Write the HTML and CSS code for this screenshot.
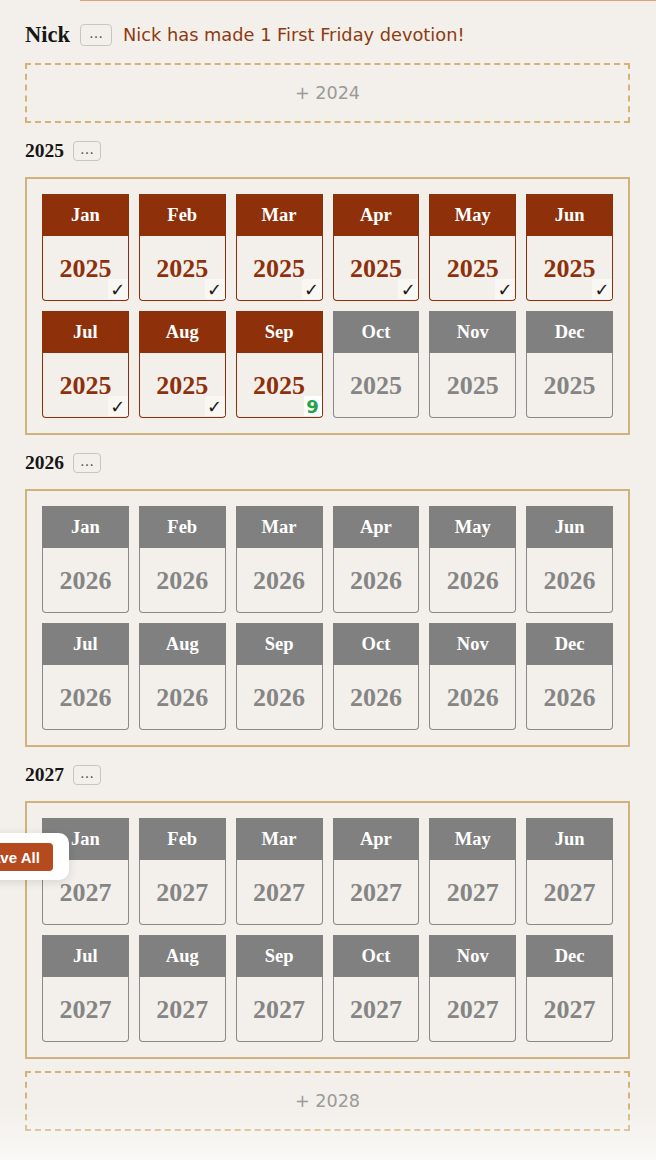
FILE: index.html
```html
<!DOCTYPE html>
<html lang="en">
<head>
<meta charset="utf-8">
<title>First Friday Devotions</title>
<link rel="stylesheet" href="styles.css">
</head>
<body>
<div class="topline"></div>
<main class="page">
  <div class="person">
    <h2 class="person-name">Nick</h2>
    <button class="more">…</button>
    <span class="status">Nick has made 1 First Friday devotion!</span>
  </div>

  <button class="add-year">+ 2024</button>

  <section class="year">
    <div class="year-head"><h3 class="year-title">2025</h3><button class="more more-sm">…</button></div>
    <div class="months">
      <div class="month done"><div class="m-name">Jan</div><div class="m-year">2025<span class="badge check">✓</span></div></div>
      <div class="month done"><div class="m-name">Feb</div><div class="m-year">2025<span class="badge check">✓</span></div></div>
      <div class="month done"><div class="m-name">Mar</div><div class="m-year">2025<span class="badge check">✓</span></div></div>
      <div class="month done"><div class="m-name">Apr</div><div class="m-year">2025<span class="badge check">✓</span></div></div>
      <div class="month done"><div class="m-name">May</div><div class="m-year">2025<span class="badge check">✓</span></div></div>
      <div class="month done"><div class="m-name">Jun</div><div class="m-year">2025<span class="badge check">✓</span></div></div>
      <div class="month done"><div class="m-name">Jul</div><div class="m-year">2025<span class="badge check">✓</span></div></div>
      <div class="month done"><div class="m-name">Aug</div><div class="m-year">2025<span class="badge check">✓</span></div></div>
      <div class="month done"><div class="m-name">Sep</div><div class="m-year">2025<span class="badge count">9</span></div></div>
      <div class="month"><div class="m-name">Oct</div><div class="m-year">2025</div></div>
      <div class="month"><div class="m-name">Nov</div><div class="m-year">2025</div></div>
      <div class="month"><div class="m-name">Dec</div><div class="m-year">2025</div></div>
    </div>
  </section>

  <section class="year">
    <div class="year-head"><h3 class="year-title">2026</h3><button class="more more-sm">…</button></div>
    <div class="months">
      <div class="month"><div class="m-name">Jan</div><div class="m-year">2026</div></div>
      <div class="month"><div class="m-name">Feb</div><div class="m-year">2026</div></div>
      <div class="month"><div class="m-name">Mar</div><div class="m-year">2026</div></div>
      <div class="month"><div class="m-name">Apr</div><div class="m-year">2026</div></div>
      <div class="month"><div class="m-name">May</div><div class="m-year">2026</div></div>
      <div class="month"><div class="m-name">Jun</div><div class="m-year">2026</div></div>
      <div class="month"><div class="m-name">Jul</div><div class="m-year">2026</div></div>
      <div class="month"><div class="m-name">Aug</div><div class="m-year">2026</div></div>
      <div class="month"><div class="m-name">Sep</div><div class="m-year">2026</div></div>
      <div class="month"><div class="m-name">Oct</div><div class="m-year">2026</div></div>
      <div class="month"><div class="m-name">Nov</div><div class="m-year">2026</div></div>
      <div class="month"><div class="m-name">Dec</div><div class="m-year">2026</div></div>
    </div>
  </section>

  <section class="year">
    <div class="year-head"><h3 class="year-title">2027</h3><button class="more more-sm">…</button></div>
    <div class="months">
      <div class="month"><div class="m-name">Jan</div><div class="m-year">2027</div></div>
      <div class="month"><div class="m-name">Feb</div><div class="m-year">2027</div></div>
      <div class="month"><div class="m-name">Mar</div><div class="m-year">2027</div></div>
      <div class="month"><div class="m-name">Apr</div><div class="m-year">2027</div></div>
      <div class="month"><div class="m-name">May</div><div class="m-year">2027</div></div>
      <div class="month"><div class="m-name">Jun</div><div class="m-year">2027</div></div>
      <div class="month"><div class="m-name">Jul</div><div class="m-year">2027</div></div>
      <div class="month"><div class="m-name">Aug</div><div class="m-year">2027</div></div>
      <div class="month"><div class="m-name">Sep</div><div class="m-year">2027</div></div>
      <div class="month"><div class="m-name">Oct</div><div class="m-year">2027</div></div>
      <div class="month"><div class="m-name">Nov</div><div class="m-year">2027</div></div>
      <div class="month"><div class="m-name">Dec</div><div class="m-year">2027</div></div>
    </div>
  </section>

  <button class="add-year add-year-last">+ 2028</button>
</main>

<div class="save-pop"><button class="save-btn">Save All</button></div>
<div class="fade"></div>
</body>
</html>
```

FILE: styles.css
```css
* { box-sizing: border-box; }

html, body {
  margin: 0;
  padding: 0;
}

body {
  background: #f3f0eb;
  font-family: "DejaVu Sans", sans-serif;
  color: #1a1a1a;
  min-height: 1160px;
}

.topline {
  height: 1px;
  margin-left: 80px;
  background: #e4a06c;
}

.page {
  padding: 0 26px 0 25px;
}

.person {
  display: flex;
  align-items: center;
  height: 26px;
  margin-top: 21px;
}

.person-name {
  margin: 0 10px 0 0;
  font-family: "Liberation Serif", serif;
  font-weight: bold;
  font-size: 22.5px;
  line-height: 26px;
  color: #161616;
}

.more {
  display: inline-flex;
  align-items: center;
  justify-content: center;
  width: 32px;
  height: 22px;
  padding: 0 0 4px 0;
  border: 1px solid #c9c5c0;
  border-radius: 4px;
  background: transparent;
  color: #555;
  font-family: "DejaVu Sans", sans-serif;
  font-size: 14px;
  line-height: 1;
}

.more-sm {
  width: 28px;
  height: 20px;
}

.status {
  margin-left: 11px;
  font-size: 17.8px;
  color: #8e3a10;
  line-height: 26px;
}

.add-year {
  display: flex;
  align-items: center;
  justify-content: center;
  width: 100%;
  height: 60px;
  margin-top: 15px;
  padding: 0;
  border: 2px dashed #d4b27a;
  background: transparent;
  color: #9a9a9a;
  font-family: "DejaVu Sans", sans-serif;
  font-size: 17.6px;
}

.add-year-last {
  margin-top: 12px;
}

.year {
  margin-top: 17px;
}

.year-head {
  display: flex;
  align-items: center;
  height: 22px;
  gap: 9px;
}

.year-title {
  margin: 0;
  font-family: "Liberation Serif", serif;
  font-weight: bold;
  font-size: 19.5px;
  line-height: 22px;
  color: #161616;
}

.months {
  margin-top: 15px;
  border: 2px solid #cfb27e;
  padding: 15px;
  display: grid;
  grid-template-columns: repeat(6, 1fr);
  column-gap: 10px;
  row-gap: 10px;
}

.month {
  height: 107px;
  display: flex;
  flex-direction: column;
  --c: #808080;
  --t: #858585;
  --b: #8a8a8a;
}

.month.done {
  --c: #8e310b;
  --t: #8e310b;
  --b: #8e310b;
}

.m-name {
  height: 42px;
  background: var(--c);
  color: #fff;
  font-family: "Liberation Serif", serif;
  font-weight: bold;
  font-size: 18.5px;
  line-height: 42px;
  text-align: center;
}

.m-year {
  position: relative;
  flex: 1;
  display: flex;
  align-items: center;
  justify-content: center;
  border: 1px solid var(--b);
  border-top: none;
  border-radius: 0 0 4px 4px;
  color: var(--t);
  font-family: "Liberation Serif", serif;
  font-weight: bold;
  font-size: 26px;
  padding-top: 2px;
}

.badge {
  position: absolute;
  right: 0;
  bottom: 1px;
  display: flex;
  align-items: center;
  justify-content: center;
  height: 20px;
  font-family: "DejaVu Sans", sans-serif;
}

.check {
  width: 20px;
  background: #f8f7f3;
  color: #1a1a1a;
  font-weight: bold;
  font-size: 18px;
}

.count {
  width: 18px;
  background: #ffffff;
  color: #23a246;
  font-weight: bold;
  font-size: 18px;
}

.save-pop {
  position: fixed;
  left: -41px;
  top: 833px;
  padding: 10px 16px 9px 10px;
  background: #fff;
  border-radius: 10px;
  box-shadow: 0 2px 10px rgba(0, 0, 0, 0.12);
}

.save-btn {
  display: block;
  height: 28px;
  padding: 0 13px;
  border: none;
  border-radius: 4px;
  background: #b64a1f;
  color: #fff;
  font-family: "Liberation Sans", sans-serif;
  font-weight: bold;
  font-size: 15px;
}

.fade {
  position: fixed;
  left: 0;
  right: 0;
  bottom: 0;
  height: 56px;
  background: linear-gradient(rgba(255, 255, 255, 0), rgba(255, 255, 255, 0.55));
  pointer-events: none;
}
```
